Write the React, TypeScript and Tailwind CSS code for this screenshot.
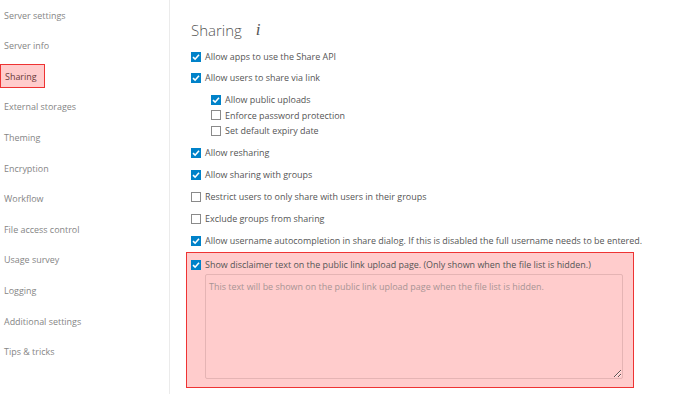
import React from "react";

const nav = [
  "Server settings",
  "Server info",
  "Sharing",
  "External storages",
  "Theming",
  "Encryption",
  "Workflow",
  "File access control",
  "Usage survey",
  "Logging",
  "Additional settings",
  "Tips & tricks",
];

function Box({ checked }: { checked?: boolean }) {
  if (checked) {
    return (
      <span className="w-[10px] h-[10px] bg-[#0082c9] flex items-center justify-center shrink-0">
        <svg width="8" height="8" viewBox="0 0 8 8">
          <path d="M1 4.2 L3.1 6.2 L7 1.8" stroke="white" strokeWidth="1.6" fill="none" />
        </svg>
      </span>
    );
  }
  return <span className="w-[10px] h-[10px] border border-[#8a8a8a] bg-white shrink-0" />;
}

function Row({ label, checked, h = "h-[22px]" }: { label: string; checked?: boolean; h?: string }) {
  return (
    <div className={`flex items-center gap-[4px] ${h}`}>
      <Box checked={checked} />
      <span className="whitespace-nowrap">{label}</span>
    </div>
  );
}

export default function App() {
  return (
    <div
      className="w-[690px] h-[394px] bg-white flex overflow-hidden text-[8.95px] text-[#555]"
      style={{ fontFamily: '"Open Sans", sans-serif' }}
    >
      <aside className="w-[170px] border-r border-[#ebebeb] shrink-0 text-[#858585]">
        {nav.map((n) =>
          n === "Sharing" ? (
            <div key={n} className="h-[30.6px] flex items-center">
              <span className="h-[24px] w-[45px] flex items-center pl-[4px] bg-[#ffcccc] border border-[#ee3333] text-[#6a3a3a]">
                {n}
              </span>
            </div>
          ) : (
            <div key={n} className="h-[30.6px] flex items-center pl-[4px]">
              {n}
            </div>
          )
        )}
      </aside>
      <main className="flex-1 pl-[21px] pt-[18px]">
        <div className="h-[24px] flex items-center gap-[14px] mb-[5px]">
          <span className="text-[15px] text-[#555] font-light">Sharing</span>
          <span className="text-[17px] italic text-[#555]" style={{ fontFamily: '"Liberation Serif", serif' }}>
            i
          </span>
        </div>
        <Row label="Allow apps to use the Share API" checked h="h-[20px]" />
        <Row label="Allow users to share via link" checked />
        <div className="pl-[20px] mt-[3px]">
          <Row label="Allow public uploads" checked h="h-[15.5px]" />
          <Row label="Enforce password protection" h="h-[15.5px]" />
          <Row label="Set default expiry date" h="h-[15.5px]" />
        </div>
        <div className="mt-[3.5px]">
          <Row label="Allow resharing" checked />
          <Row label="Allow sharing with groups" checked />
          <Row label="Restrict users to only share with users in their groups" />
          <Row label="Exclude groups from sharing" />
          <Row label="Allow username autocompletion in share dialog. If this is disabled the full username needs to be entered." checked />
        </div>
        <div className="-ml-[5px] w-[448px] bg-[#ffcccc] border border-[#ee3333] pl-[4px] pr-[11px] pt-[2px] pb-[8px]">
          <Row label="Show disclaimer text on the public link upload page. (Only shown when the file list is hidden.)" checked h="h-[19px]" />
          <textarea
            className="ml-[14px] w-[418px] h-[105px] block border border-[#e5b4b4] rounded-[2px] bg-transparent px-[3px] py-[5px] text-[8.95px] placeholder-[#a89494] outline-none"
            placeholder="This text will be shown on the public link upload page when the file list is hidden."
          />
        </div>
      </main>
    </div>
  );
}
